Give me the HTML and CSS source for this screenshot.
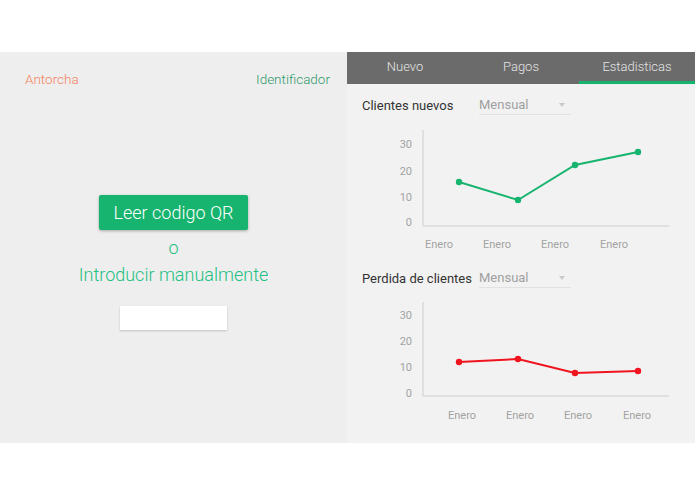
FILE: index.html
```
<!DOCTYPE html>
<html>
<head>
<meta charset="UTF-8">
<title>Control</title>
<link rel="stylesheet" href="styles.css">
</head>
<body>
<div class="app">
    <div class="left">
        <div class="left-head">
            <span class="torch">Antorcha</span>
            <span class="ident">Identificador</span>
        </div>
        <div class="scan">
            <div class="btn-qr">Leer codigo QR</div>
            <div class="or">o</div>
            <div class="manual">Introducir manualmente</div>
            <div class="code-input"></div>
        </div>
    </div>
    <div class="right">
        <div class="tabs">
            <div class="tab">Nuevo</div>
            <div class="tab">Pagos</div>
            <div class="tab active">Estadisticas</div>
        </div>
        <div class="stat-head first">
            <span class="stat-title">Clientes nuevos</span>
            <div class="select">Mensual<span class="arrow"></span></div>
        </div>
        <svg class="chart first" width="348" height="140" viewBox="0 0 348 140">
            <g class="axis">
                <line x1="76" y1="10" x2="76" y2="106"/>
                <line x1="76" y1="106" x2="322" y2="106"/>
            </g>
            <g class="ylab">
                <text x="65" y="28">30</text>
                <text x="65" y="55">20</text>
                <text x="65" y="81">10</text>
                <text x="65" y="106">0</text>
            </g>
            <g class="xlab">
                <text x="78" y="128">Enero</text>
                <text x="136" y="128">Enero</text>
                <text x="194" y="128">Enero</text>
                <text x="253" y="128">Enero</text>
            </g>
            <polyline class="line green" points="112,62 171,80 228,45 291,32"/>
            <g class="dots green">
                <circle cx="112" cy="62" r="3.2"/>
                <circle cx="171" cy="80" r="3.2"/>
                <circle cx="228" cy="45" r="3.2"/>
                <circle cx="291" cy="32" r="3.2"/>
            </g>
        </svg>
        <div class="stat-head">
            <span class="stat-title">Perdida de clientes</span>
            <div class="select">Mensual<span class="arrow"></span></div>
        </div>
        <svg class="chart" width="348" height="140" viewBox="0 0 348 140">
            <g class="axis">
                <line x1="76" y1="13" x2="76" y2="107"/>
                <line x1="76" y1="107" x2="322" y2="107"/>
            </g>
            <g class="ylab">
                <text x="65" y="30">30</text>
                <text x="65" y="56">20</text>
                <text x="65" y="82">10</text>
                <text x="65" y="108">0</text>
            </g>
            <g class="xlab">
                <text x="101" y="130">Enero</text>
                <text x="159" y="130">Enero</text>
                <text x="217" y="130">Enero</text>
                <text x="276" y="130">Enero</text>
            </g>
            <polyline class="line red" points="112,73 171,70 228,84 291,82"/>
            <g class="dots red">
                <circle cx="112" cy="73" r="3.2"/>
                <circle cx="171" cy="70" r="3.2"/>
                <circle cx="228" cy="84" r="3.2"/>
                <circle cx="291" cy="82" r="3.2"/>
            </g>
        </svg>
    </div>
</div>
</body>
</html>
```
FILE: styles.css
```
html, body{
    margin:0;
    background:#fff;
    font-family:Roboto, "Liberation Sans", sans-serif;
}
.app{
    display:flex;
    margin-top:52px;
    height:391px;
}
.left{
    width:347px;
    background:#eeeeee;
}
.left-head{
    display:flex;
    justify-content:space-between;
    padding:18px 17px 0 25px;
    font-size:13.5px;
    line-height:18px;
    font-weight:300;
}
.torch{
    color:#f4825f;
}
.ident{
    color:#2f9a6c;
}
.scan{
    display:flex;
    flex-direction:column;
    align-items:center;
    margin-top:107px;
}
.btn-qr{
    width:149px;
    height:35px;
    line-height:35px;
    text-align:center;
    background:#16b46e;
    color:#fff;
    font-size:18px;
    font-weight:300;
    border-radius:2px;
    box-shadow:0 1px 3px rgba(0,0,0,.3);
}
.or{
    margin-top:6px;
    color:#21bf80;
    font-size:18px;
    font-weight:300;
    line-height:24px;
}
.manual{
    color:#21bf80;
    font-size:18px;
    font-weight:300;
    line-height:30px;
}
.code-input{
    width:107px;
    height:24px;
    margin-top:16px;
    background:#fff;
    box-shadow:0 1px 2px rgba(0,0,0,.18);
}
.right{
    flex:1;
    background:#f2f2f2;
}
.tabs{
    display:flex;
    height:32px;
    background:#6b6b6b;
}
.tab{
    flex:1;
    text-align:center;
    color:#e4e4e4;
    font-size:13px;
    line-height:30px;
    font-weight:300;
    box-sizing:border-box;
}
.tab.active{
    border-bottom:3px solid #16b46e;
}
.stat-head{
    display:flex;
    align-items:flex-end;
    height:18px;
    padding-left:15px;
    margin-top:10px;
}
.stat-head.first{
    margin-top:13px;
}
.stat-title{
    min-width:110px;
    margin-right:7px;
    font-size:13px;
    line-height:18px;
    color:#333;
}
.select{
    position:relative;
    width:92px;
    font-size:13px;
    line-height:18px;
    color:#a0a0a0;
    border-bottom:1px solid #e2e2e2;
}
.arrow{
    position:absolute;
    right:6px;
    top:7px;
    border-left:3px solid transparent;
    border-right:3px solid transparent;
    border-top:4px solid #c8c8c8;
}
.chart{
    display:block;
    margin-top:1px;
}
.chart.first{
    margin-top:5px;
}
.axis line{
    stroke:#dadada;
    stroke-width:1.5;
}
.ylab text{
    font-size:11px;
    fill:#a3a3a3;
    text-anchor:end;
}
.xlab text{
    font-size:11px;
    fill:#a3a3a3;
}
.line{
    fill:none;
    stroke-width:2;
}
.line.green{
    stroke:#16b46e;
}
.line.red{
    stroke:#f0141e;
}
.dots.green{
    fill:#16b46e;
}
.dots.red{
    fill:#f0141e;
}
```
